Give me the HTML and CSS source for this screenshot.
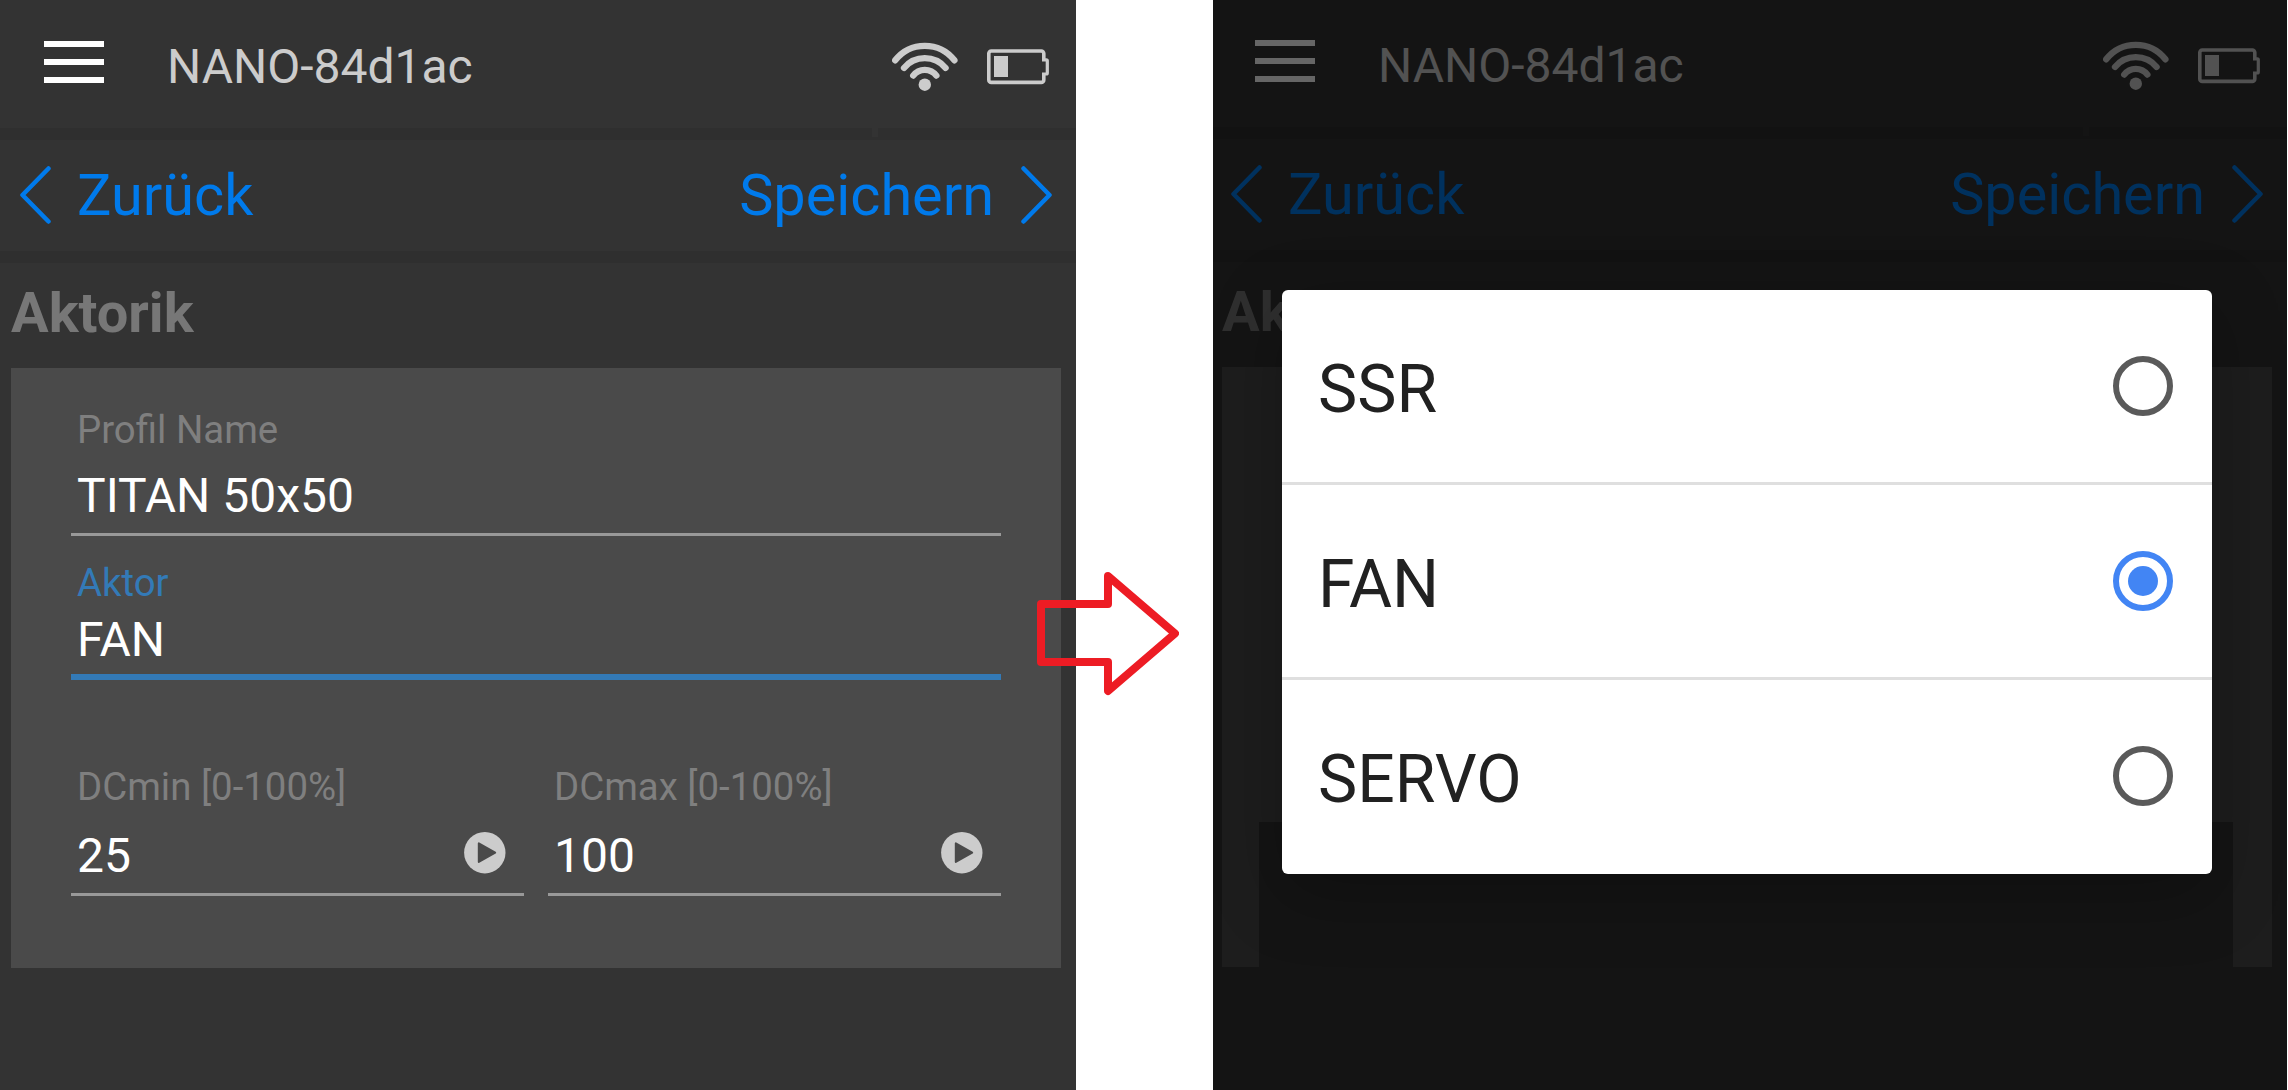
FILE: index.html
```html
<!DOCTYPE html>
<html lang="de">
<head>
<meta charset="utf-8">
<title>NANO-84d1ac</title>
<link rel="stylesheet" href="styles.css">
</head>
<body>
<svg class="defs" width="0" height="0" aria-hidden="true">
  <symbol id="menu" viewBox="0 0 60 42"><path fill="currentColor" d="M0 0h60v6H0zM0 18h60v6H0zM0 36h60v6H0z"/></symbol>
  <symbol id="wifi" viewBox="0 0 66 50">
    <path fill="none" stroke="currentColor" stroke-width="6.300" stroke-linecap="round" d="M3.200 18.300a37.500 37.500 0 0 1 59.200 0M12 25.900a27 27 0 0 1 41.600 0M21.200 33.600a14.500 14.500 0 0 1 23.200 0"/>
    <circle cx="32.800" cy="42.700" r="6.200" fill="currentColor"/>
  </symbol>
  <symbol id="battery" viewBox="0 0 62 36">
    <rect x="1.800" y="2" width="55" height="31.400" rx="2.500" fill="none" stroke="currentColor" stroke-width="3.600"/>
    <path class="gap" d="M54.500 11.200h5v13h-5z"/>
    <path fill="none" stroke="currentColor" stroke-width="3.200" d="M55 10.800h4.300q1 0 1 1v12.200q0 1-1 1H55" stroke-linejoin="round"/>
    <path fill="currentColor" d="M7 7h14v21H7z"/>
  </symbol>
  <symbol id="chevron" viewBox="0 0 31 58"><path fill="none" stroke="currentColor" stroke-width="4.500" stroke-linecap="round" stroke-linejoin="round" d="M28.500 2.500 2.500 29l26 26.500"/></symbol>
  <symbol id="play" viewBox="0 0 42 42"><circle cx="20.800" cy="20.700" r="20.700" fill="#ccc"/><path fill="#4a4a4a" stroke="#4a4a4a" stroke-width="2" stroke-linejoin="round" d="M14.800 11.400V30L31.200 20.700z"/></symbol>
</svg>

<main class="stage">
  <section class="phone">
    <div class="screen">
      <header class="topbar">
        <svg class="menu"><use href="#menu"/></svg>
        <span class="device">NANO-84d1ac</span>
        <svg class="wifi"><use href="#wifi"/></svg>
        <svg class="battery"><use href="#battery"/></svg>
      </header>
      <div class="band band-split"></div>
      <nav class="nav">
        <a class="nav-link"><svg class="chevron"><use href="#chevron"/></svg><span class="back">Zurück</span></a>
        <a class="nav-link"><span class="save">Speichern</span><svg class="chevron chevron-next"><use href="#chevron"/></svg></a>
      </nav>
      <div class="band"></div>
      <h1 class="heading">Aktorik</h1>
      <form class="card">
        <div class="field">
          <label class="label">Profil Name</label>
          <div class="value value-name">TITAN 50x50</div>
        </div>
        <div class="field field-active">
          <label class="label">Aktor</label>
          <div class="value value-active">FAN</div>
        </div>
        <div class="pair">
          <div class="field">
            <label class="label">DCmin [0-100%]</label>
            <div class="value value-dc">25<svg class="play"><use href="#play"/></svg></div>
          </div>
          <div class="field">
            <label class="label">DCmax [0-100%]</label>
            <div class="value value-dc">100<svg class="play"><use href="#play"/></svg></div>
          </div>
        </div>
      </form>
    </div>
  </section>

  <section class="phone phone-dimmed">
    <div class="screen">
      <header class="topbar">
        <svg class="menu"><use href="#menu"/></svg>
        <span class="device">NANO-84d1ac</span>
        <svg class="wifi"><use href="#wifi"/></svg>
        <svg class="battery"><use href="#battery"/></svg>
      </header>
      <div class="band band-split"></div>
      <nav class="nav">
        <a class="nav-link"><svg class="chevron"><use href="#chevron"/></svg><span class="back">Zurück</span></a>
        <a class="nav-link"><span class="save">Speichern</span><svg class="chevron chevron-next"><use href="#chevron"/></svg></a>
      </nav>
      <div class="band"></div>
      <h1 class="heading">Aktorik</h1>
      <div class="card"></div>
    </div>
    <div class="cover"></div>
    <div class="scrim"></div>
    <div class="dialog">
      <div class="option"><span class="option-text">SSR</span><span class="radio"></span></div>
      <div class="option"><span class="option-text">FAN</span><span class="radio radio-on"></span></div>
      <div class="option"><span class="option-text">SERVO</span><span class="radio"></span></div>
    </div>
  </section>

  <svg class="arrow" viewBox="0 0 144 126"><path d="M6 34h67V6l67 57.500L73 121V92H6z"/></svg>
</main>
</body>
</html>
```
FILE: styles.css
```css
* { box-sizing: border-box; }

body {
  margin: 0;
  background: #fff;
  font-family: Roboto, "Liberation Sans", sans-serif;
}

svg { display: block; flex: none; }
.defs { position: absolute; }

.stage {
  position: relative;
  display: flex;
  gap: 137px;
  width: 2288px;
  height: 1090px;
  overflow: hidden;
}

.phone {
  position: relative;
  flex: none;
  width: 1076px;
  height: 1090px;
  overflow: hidden;
  background: #333;
}
.phone-dimmed { width: 1074px; }
.phone-dimmed .screen { margin: -1px 0 0 -2px; }
.screen { width: 1076px; }

.topbar {
  display: flex;
  align-items: flex-start;
  height: 128px;
  padding: 0 27px 0 44px;
  color: #ccc;
}
.menu { width: 60px; height: 42px; margin-top: 41px; color: #fff; }
.device {
  flex: 1;
  margin-left: 63px;
  font-size: 48px;
  line-height: 134px;
  white-space: nowrap;
}
.wifi { width: 66px; height: 50px; margin: 42px 29px 0 0; }
.battery { width: 62px; height: 36px; margin-top: 49px; }
.gap { fill: #333; }

.band { height: 12px; background: #2f2f2f; }
.band-split {
  background: linear-gradient(#333, #333) 872px 0 / 6px 9px no-repeat #2f2f2f;
}

.nav {
  display: flex;
  justify-content: space-between;
  height: 111px;
  padding: 0 24px 0 20px;
  color: #007aeb;
}
.nav-link { display: flex; font-size: 57.6px; line-height: 111px; }
.chevron { width: 31px; height: 58px; margin-top: 26px; }
.chevron-next { transform: scaleX(-1); }
.back { margin-left: 26px; }
.save { margin-right: 27px; }

.heading {
  height: 105px;
  margin: 0;
  padding-left: 11px;
  color: #777;
  font-size: 56px;
  font-weight: 700;
  line-height: 100px;
}

.card {
  width: 1050px;
  height: 600px;
  margin-left: 11px;
  padding: 38px 60px 0;
  background: #4a4a4a;
}
.field { flex: 1; }
.label {
  display: block;
  height: 47px;
  padding-left: 6px;
  color: #7f7f7f;
  font-size: 38.4px;
  line-height: 47px;
}
.value {
  display: flex;
  justify-content: space-between;
  padding-left: 6px;
  border-bottom: 3px solid #999;
  color: #fff;
  font-size: 48px;
}
.value-name { padding-top: 6px; line-height: 74px; }
.field-active { margin-top: 23px; }
.field-active .label { color: #337ab7; }
.value-active { border-bottom: 6px solid #337ab7; line-height: 68px; }
.pair { display: flex; gap: 24px; margin-top: 83px; }
.value-dc { padding: 8px 18px 0 6px; line-height: 75px; }
.play { width: 42px; height: 42px; margin-top: 14px; }

.cover {
  position: absolute;
  left: 46px;
  top: 822px;
  width: 974px;
  height: 268px;
  background: #333;
}
.scrim { position: absolute; inset: 0; background: rgba(0, 0, 0, 0.6); }

.dialog {
  position: absolute;
  left: 69px;
  top: 290px;
  width: 930px;
  height: 584px;
  border-radius: 6px;
  overflow: hidden;
  background: #fff;
  box-shadow: 0 20px 70px rgba(0, 0, 0, 0.25);
}
.option {
  display: flex;
  align-items: center;
  justify-content: space-between;
  height: 195px;
  padding: 0 39px 0 36px;
  border-bottom: 3px solid #dfdfdf;
}
.option:last-child { height: 192px; border-bottom: 0; }
.option-text { padding-top: 7px; color: #212121; font-size: 66px; line-height: 80px; }
.radio {
  display: grid;
  place-items: center;
  width: 60px;
  height: 60px;
  border: 6px solid #5a5a5a;
  border-radius: 50%;
}
.radio-on { border-color: #4285f4; }
.radio-on::after {
  content: "";
  width: 30px;
  height: 30px;
  border-radius: 50%;
  background: #4285f4;
}

.arrow {
  position: absolute;
  left: 1035px;
  top: 570px;
  width: 144px;
  height: 126px;
}
.arrow path {
  fill: none;
  stroke: #ed1c24;
  stroke-width: 8;
  stroke-linejoin: round;
}
```
